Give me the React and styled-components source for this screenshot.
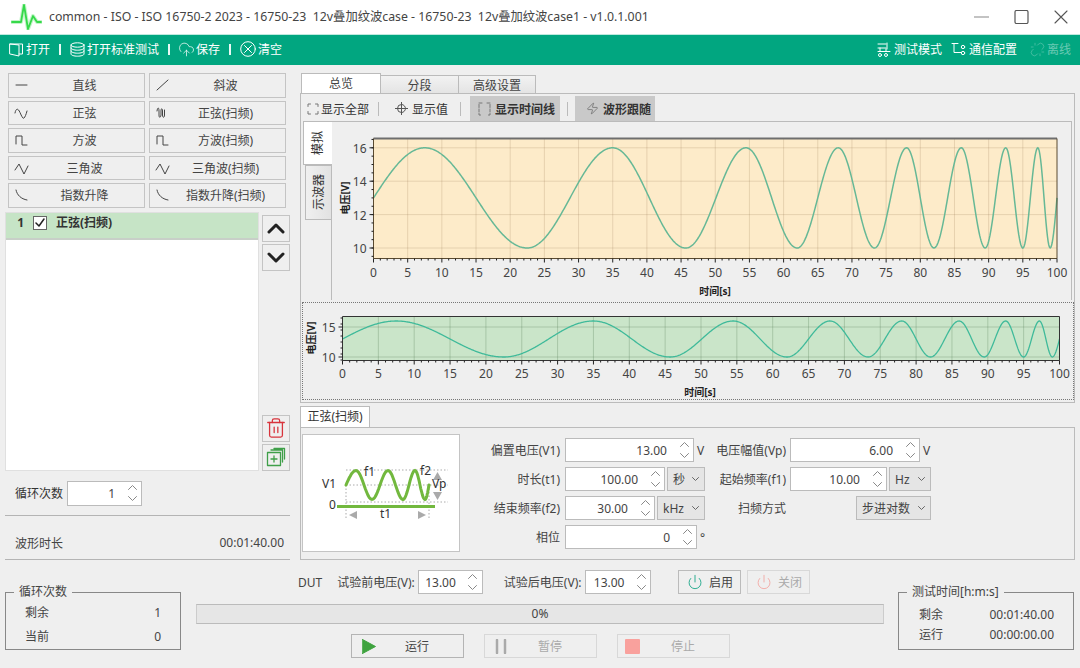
import React from "react";
import styled, { createGlobalStyle } from "styled-components";
import { CloudUpload, Power, Zap, Trash2, Unlink } from "lucide-react";

const FONT = `"Noto Sans", "Noto Sans CJK SC", "Open Sans", sans-serif`;

const Global = createGlobalStyle`
  html, body { margin: 0; padding: 0; background: #efefef; }
  * { box-sizing: border-box; }
  body { font-family: ${FONT}; font-size: 12px; color: #333; }
`;

const Page = styled.div`
  width: 1080px; height: 668px; overflow: hidden; background: #efefef;
  display: flex; flex-direction: column;
`;

/* ---------- title bar ---------- */
const TitleBar = styled.header`
  height: 34px; background: #fff; display: flex; align-items: center; padding-left: 11px;
`;
const TitleText = styled.div`
  margin-left: 7px; font-size: 12.3px; color: #444; white-space: pre; flex: 1; line-height: 34px;
`;
const WinControls = styled.div`
  display: flex; gap: 25px; padding-right: 12px; align-items: center;
`;

/* ---------- green toolbar ---------- */
const Toolbar = styled.nav`
  height: 31px; background: #01a680; color: #fff; display: flex; align-items: center;
  padding: 0 9px 2px; justify-content: space-between; border-top: 1px solid #bfe9de;
`;
const ToolGroup = styled.div`display: flex; align-items: center;`;
const ToolItem = styled.div`
  display: flex; align-items: center; gap: 2px; white-space: nowrap; font-size: 12px;
  margin-right: ${p => p.$mr || 0}px; opacity: ${p => p.$faded ? 0.4 : 1};
`;
const ToolSep = styled.span`
  width: 2px; height: 11px; background: #e8f8f4; margin: 0 9px;
`;
const CloudIcon = styled(CloudUpload)`margin: 0 -1px; flex: none;`;

/* ---------- body ---------- */
const Body = styled.div`height: 505px; display: flex;`;
const LeftCol = styled.aside`
  width: 300px; padding: 8px 10px 0 5px; display: flex; flex-direction: column;
`;
const WaveGrid = styled.div`
  display: grid; grid-template-columns: 137px 137px; gap: 3px 4px; margin-left: 3px;
`;
const WaveBtn = styled.button`
  height: 24.5px; background: #efefef; border: 1px solid #c4c4c4; padding: 0 0 0 5px;
  display: grid; grid-template-columns: 16px 1fr 5px; align-items: center;
  font: 12px ${FONT}; color: #444;
`;
const ListRow = styled.div`display: flex; gap: 3px; margin-top: 4px; height: 259px;`;
const WaveList = styled.div`
  width: 254px; background: #fff; border: 1px solid #e0e0e0;
`;
const WaveRow = styled.div`
  height: 27px; background: #c6e4c6; border-bottom: 2px solid #c8cfc8;
  display: flex; align-items: flex-start; padding-top: 2px; font-weight: 700; color: #333;
`;
const RowNum = styled.span`width: 27px; text-align: right; padding-right: 9px; line-height: 16px;`;
const Check = styled.span`
  width: 14px; height: 14px; border: 1px solid #666; background: #fff; margin: 1px 9px 0 0;
  display: flex; align-items: center; justify-content: center;
`;
const RowText = styled.span`line-height: 16px; font-size: 12px;`;
const SideBtns = styled.div`
  width: 28px; display: flex; flex-direction: column; gap: 2px; padding-top: 3px;
`;
const SquareBtn = styled.button`
  width: 28px; height: 27px; background: #efefef; border: 1px solid #c4c4c4; padding: 0;
  display: flex; align-items: center; justify-content: center;
  margin-top: ${p => p.$push ? "auto" : "0"};
`;
const LoopRow = styled.div`
  display: flex; align-items: center; gap: 4px; margin-top: 10px; padding-left: 10px; height: 25px;
`;
const Duration = styled.div`
  margin-top: 9px; height: 45px; padding: 11px 6px 0 10px;
  border-top: 1px solid #b4b4b4; border-bottom: 1px solid #b4b4b4;
  display: flex; justify-content: space-between; align-items: center; color: #444;
`;

/* ---------- right column ---------- */
const RightCol = styled.main`width: 775px; padding-top: 8px; display: flex; flex-direction: column;`;
const TabBar = styled.div`display: flex; height: 20px; align-items: flex-end; padding-left: 1px;`;
const Tab = styled.div`
  width: ${p => p.$w}px; height: ${p => p.$active ? 20 : 18}px; text-align: center;
  line-height: ${p => p.$active ? 20 : 19}px; font-size: 12px; color: #444;
  background: ${p => p.$active ? "#fff" : "linear-gradient(#f2f2f2,#e4e4e4)"};
  border: 1px solid #bbb; border-bottom: none; margin-right: -1px;
`;
const TabPanel = styled.section`
  height: 310px; border: 1px solid #bbb; padding: 2px 2px 0 0; background: #efefef;
  display: flex; flex-direction: column;
`;
const ChartTools = styled.div`
  height: 25px; display: flex; align-items: stretch; padding-left: 6px; flex: none;
`;
const ChartTool = styled.div`
  display: flex; align-items: center; gap: ${p => p.$gap}px; font-size: 12px; white-space: nowrap;
  padding: 0 ${p => p.$pr}px 0 ${p => p.$pl}px; color: #333;
  background: ${p => p.$on ? "#c9c9c9" : "transparent"};
  font-weight: ${p => p.$on ? 700 : 400};
`;
const ChartSep = styled.span`
  width: 1px; height: 14px; background: #bbb; align-self: center; margin: 0 ${p => p.$m}px;
`;
const ChartArea = styled.div`display: flex; height: 179px; flex: none;`;
const VTabs = styled.div`width: 30px; display: flex; flex-direction: column; padding-left: 2px;`;
const VTab = styled.div`
  display: flex; align-items: center; justify-content: center;
  height: ${p => p.$h}px; color: #333;
  background: ${p => p.$active ? "#fff" : "linear-gradient(90deg,#f0f0f0,#e2e2e2)"};
  border: 1px solid #bbb; border-right: none;
  margin-left: ${p => p.$active ? 0 : 2}px;
  margin-right: ${p => p.$active ? -1 : 0}px;
  position: relative; z-index: ${p => p.$active ? 1 : 0};
`;
const VTabText = styled.span`
  writing-mode: vertical-rl; text-orientation: sideways; transform: rotate(180deg);
  font-size: 12px; line-height: 14px;
`;
const ChartPane = styled.div`
  width: 741px; height: 179px; border: 1px solid #bbb; border-bottom: none;
`;
const MiniPane = styled.div`
  margin: 2px 0 0 1px; width: 772px; height: 98px; border: 1px dotted #777;
`;
const ParamTab = styled.div`
  margin-top: 3px; width: 70px; height: 21px; background: #fff; border: 1px solid #bbb; border-bottom: none;
  text-align: center; line-height: 19px; font-size: 12px;
`;
const ParamPanel = styled.section`
  height: 133px; border: 1px solid #bbb; display: flex; padding: 6px 0 0 1px;
`;
const Diagram = styled.div`
  width: 158px; height: 118px; background: #fff; border: 1px solid #c4c4c4; flex: none;
`;
const Form = styled.div`
  display: grid; grid-template-columns: 105px 140px 85px 142px; grid-auto-rows: 24px;
  row-gap: 5px; margin-top: 4px; align-items: center;
`;
const FieldLabel = styled.label`
  text-align: right; padding-right: ${p => p.$pr ?? 5}px; font-size: 12px; color: #444; white-space: nowrap;
`;
const FieldCtl = styled.div`display: flex; align-items: center; gap: 2px; height: 24px;`;
const FieldRight = styled(FieldCtl)`justify-content: flex-end; padding-right: 1px;`;
const Unit = styled.span`margin-left: 1px; font-size: 12px; color: #444;`;

const SpinBox = styled.div`
  width: ${p => p.$w}px; height: ${p => p.$h || 24}px; background: #fff; border: 1px solid #bbb;
  display: flex; align-items: center; justify-content: flex-end; flex: none;
  font-size: 12px; color: #444;
`;
const SpinValue = styled.span`padding-right: 8px;`;
const SpinArrows = styled.span`
  width: 18px; display: flex; flex-direction: column; align-items: center; gap: 6px; flex: none;
`;
const Select = styled.div`
  width: ${p => p.$w}px; height: 24px; background: #e5e5e5; border: 1px solid #bbb;
  display: flex; align-items: center; justify-content: space-between; padding: 0 5px 0 5px;
  font-size: 12px; color: #444; flex: none;
`;

/* ---------- bottom ---------- */
const Bottom = styled.footer`display: flex; height: 98px; padding-left: 5px; gap: 15px;`;
const Group = styled.fieldset`
  width: 176px; height: 65px; margin: 15px 0 0 0; padding: ${p => p.$pt}px 19px 0 ${p => p.$pl}px;
  border: 1px solid #888; flex: none;
  legend {
    margin-left: ${p => 8 - p.$pl}px; padding: 0 5px; font-size: 12px; line-height: 14px; color: #444;
  }
`;
const GroupRow = styled.div`
  display: flex; justify-content: space-between; height: ${p => p.$h}px; align-items: center; color: #444;
`;
const Center = styled.div`width: 688px; flex: none; margin-right: -1px; display: flex; flex-direction: column;`;
const DutRow = styled.div`display: flex; align-items: center; height: 24px; padding-left: 102px;`;
const DutLabel = styled.span`
  margin: 0 ${p => p.$mr ?? 3}px 0 ${p => p.$ml ?? 0}px; font-size: 12px; color: #444; white-space: nowrap;
`;
const SmallBtn = styled.button`
  width: 63px; height: 24px; margin-left: ${p => p.$ml}px; background: #efefef;
  border: 1px solid ${p => p.$off ? "#d8d8d8" : "#bbb"};
  color: ${p => p.$off ? "#aaa" : "#444"}; font: 12px ${FONT};
  display: flex; align-items: center; justify-content: center; gap: 6px; padding: 0;
`;
const Progress = styled.div`
  margin-top: 10px; height: 20px; background: #e6e6e6; border-top: 1px solid #bbb; border-bottom: 1px solid #bbb;
  border-left: 1px solid #ccc; border-right: 1px solid #ccc;
  text-align: center; line-height: 18px; font-size: 12px; color: #444;
`;
const ActionRow = styled.div`display: flex; justify-content: center; gap: 20px; margin-top: 10px;`;
const ActionBtn = styled.button`
  width: 113px; height: 24px; background: #efefef; border: 1px solid ${p => p.$off ? "#d8d8d8" : "#b4b4b4"};
  padding: 0 0 0 10px; display: grid; grid-template-columns: 16px 1fr 6px; align-items: center;
  font: 12px ${FONT}; color: ${p => p.$off ? "#aaa" : "#444"};
`;
const StopMark = styled.span`
  display: block; width: 15px; height: 15px; margin-left: -3px; background: #f9a19d; border-radius: 1px;
`;

/* ---------- icons ---------- */
const Ico = ({ w = 14, h = 14, children, color = "#444", sw = 1, vb }) => (
  <svg width={w} height={h} viewBox={vb || `0 0 ${w} ${h}`} fill="none" stroke={color} strokeWidth={sw}
    strokeLinecap="round" strokeLinejoin="round" style={{ flex: "none", display: "block" }}>{children}</svg>
);
const Up = () => <Ico w={9} h={5} color="#888"><path d="M.5 4.5 4.5.5l4 4" /></Ico>;
const Down = () => <Ico w={9} h={5} color="#888"><path d="M.5.5l4 4 4-4" /></Ico>;
const Small = () => <Ico w={7} h={4} color="#666"><path d="M.5.5l3 3 3-3" /></Ico>;

const WAVES = {
  line: <path d="M2 7h11" />,
  ramp: <path d="M2 12 13 2" />,
  sine: <path d="M1 7C2 2 4 2 6 6.500S9 13 10 12s2-3 3-7" />,
  sweep: <path d="M2 5c.5-4 2-4 2 0v4c0 3 1.500 3 2 0V5c0-3 1.500-3 1.500 0v4c0 3 2 3 2 0V4" />,
  square: <path d="M2 11V3h6v9h5" />,
  tri: <path d="M1 9l4-6 5 10 4-8" />,
  exp: <path d="M2 2c1 5 5 9 11 10" />,
};

const Chevron = ({ up }) => (
  <Ico w={18} h={11} color="#222" sw={3}><path d={up ? "M2 9l7-7 7 7" : "M2 2l7 7 7-7"} /></Ico>
);

/* ---------- charts ---------- */
const EXT = [7.5, 22.5, 35, 45.7, 54.5, 62, 68, 73.3, 78, 82, 86, 89.5, 92.5, 95, 97.2, 99];
const wave = t => {
  const knots = [0, ...EXT, 100];
  const phases = [0, ...EXT.map((_, i) => Math.PI / 2 + i * Math.PI)];
  phases.push(phases[phases.length - 1] + Math.PI / 2);
  let i = 0;
  while (i < knots.length - 2 && t > knots[i + 1]) i++;
  const ph = phases[i] + (phases[i + 1] - phases[i]) * (t - knots[i]) / (knots[i + 1] - knots[i]);
  return 13 + 3 * Math.sin(ph);
};

const Chart = ({ w, h, x0, x1, top, bottom, yOf, yTicks, yMinor, bg, grid, line, lineW, frame, topLine, topW,
  xLabelY, xTitle, yTitle, fs }) => {
  const xOf = t => x0 + (x1 - x0) * t / 100;
  const pts = [];
  for (let t = 0; t <= 100.001; t += 0.1) pts.push(`${xOf(t).toFixed(2)},${yOf(wave(t)).toFixed(2)}`);
  const majors = Array.from({ length: 21 }, (_, i) => i * 5);
  const minors = Array.from({ length: 101 }, (_, i) => i).filter(i => i % 5 !== 0);
  return (
    <svg width={w} height={h} style={{ display: "block" }}>
      <rect x={x0} y={top} width={x1 - x0} height={bottom - top} fill={bg} />
      {majors.slice(1, -1).map(t => <line key={t} x1={xOf(t)} x2={xOf(t)} y1={top} y2={bottom} stroke={grid} />)}
      {yTicks.map(v => <line key={v} x1={x0} x2={x1} y1={yOf(v)} y2={yOf(v)} stroke={grid} />)}
      <polyline points={pts.join(" ")} fill="none" stroke={line} strokeWidth={lineW} />
      <line x1={x0} x2={x1} y1={top} y2={top} stroke={topLine} strokeWidth={topW} />
      <line x1={x1} x2={x1} y1={top} y2={bottom} stroke={frame} />
      <line x1={x0} x2={x0} y1={top} y2={bottom} stroke={frame} />
      <line x1={x0} x2={x1} y1={bottom} y2={bottom} stroke={frame} strokeWidth="1.2" />
      {minors.map(t => <line key={t} x1={xOf(t)} x2={xOf(t)} y1={bottom} y2={bottom + 2} stroke="#222" />)}
      {majors.map(t => <line key={t} x1={xOf(t)} x2={xOf(t)} y1={bottom} y2={bottom + 4} stroke="#222" />)}
      {yMinor.map(v => <line key={v} x1={x0 - 2} x2={x0} y1={yOf(v)} y2={yOf(v)} stroke="#222" />)}
      {yTicks.map(v => <line key={v} x1={x0 - 4} x2={x0} y1={yOf(v)} y2={yOf(v)} stroke="#222" />)}
      {yTicks.map(v => (
        <text key={v} x={x0 - 7} y={yOf(v) + 5} textAnchor="end" fontSize={fs} fill="#444">{v}</text>
      ))}
      {majors.map(t => (
        <text key={t} x={xOf(t)} y={xLabelY} textAnchor="middle" fontSize={fs} fill="#444">{t}</text>
      ))}
      <text x={xTitle[0]} y={xTitle[1]} textAnchor="middle" fontSize="10" fontWeight="700" fill="#222">时间[s]</text>
      <text transform={`translate(${yTitle[0]} ${yTitle[1]}) rotate(-90)`} textAnchor="middle" fontSize="10"
        fontWeight="700" fill="#222">电压[V]</text>
    </svg>
  );
};

const range = (a, b, s) => {
  const r = [];
  for (let v = a; v <= b + 1e-6; v += s) r.push(+v.toFixed(2));
  return r;
};

const diagramWave = () => {
  const ks = [[44, 0], [54, 1], [70, 3], [86, 5], [101, 7], [113, 9], [123, 11], [127, 12]];
  const pts = [];
  for (let i = 0; i < ks.length - 1; i++) {
    for (let s = 0; s <= 12; s++) {
      const x = ks[i][0] + (ks[i + 1][0] - ks[i][0]) * s / 12;
      const ph = (ks[i][1] + (ks[i + 1][1] - ks[i][1]) * s / 12) * Math.PI / 2;
      pts.push(`${x.toFixed(1)},${(51 - 14.5 * Math.sin(ph)).toFixed(1)}`);
    }
  }
  return pts.join(" ");
};

const Spin = ({ w, v, h }) => (
  <SpinBox $w={w} $h={h}>
    <SpinValue>{v}</SpinValue>
    <SpinArrows><Up /><Down /></SpinArrows>
  </SpinBox>
);

const Sel = ({ w, v }) => <Select $w={w}><span>{v}</span><Small /></Select>;

const BUTTONS = [
  ["line", "直线", "ramp", "斜波"],
  ["sine", "正弦", "sweep", "正弦(扫频)"],
  ["square", "方波", "square", "方波(扫频)"],
  ["tri", "三角波", "tri", "三角波(扫频)"],
  ["exp", "指数升降", "exp", "指数升降(扫频)"],
];

const Wbtn = ({ k, t }) => (
  <WaveBtn>
    <Ico w={15} h={14} color="#444">{WAVES[k]}</Ico>
    <span>{t}</span>
    <span />
  </WaveBtn>
);

export default function App() {
  return (
    <Page>
      <Global />
      <TitleBar>
        <svg width="31" height="26" viewBox="0 0 31 26" fill="none" style={{ flex: "none" }}>
          <path d="M1 18H10L13 1L17 25L22 12L26 18H30" stroke="#35d94a" strokeOpacity="0.3" strokeWidth="4" strokeLinejoin="round" strokeLinecap="round" />
          <path d="M1 18H10L13 1L17 25L22 12L26 18H30" stroke="#35d94a" strokeWidth="1.8" strokeLinejoin="round" strokeLinecap="round" />
        </svg>
        <TitleText>{"common - ISO - ISO 16750-2 2023 - 16750-23  12v叠加纹波case - 16750-23  12v叠加纹波case1 - v1.0.1.001"}</TitleText>
        <WinControls>
          <Ico w={15} h={14} color="#888" sw={1.2}><path d="M0 7h15" /></Ico>
          <Ico w={15} h={14} color="#555" sw={1.2}><rect x="1" y="0.500" width="13" height="13" rx="1.500" /></Ico>
          <Ico w={14} h={14} color="#555" sw={1.1}><path d="M1 1l12 12M13 1 1 13" /></Ico>
        </WinControls>
      </TitleBar>

      <Toolbar>
        <ToolGroup>
          <ToolItem>
            <Ico w={15} h={15} color="#fff"><path d="M1 2l9 1v11l-9-2zM1 2h12.500v10H10" /></Ico>打开
          </ToolItem>
          <ToolSep />
          <ToolItem>
            <Ico w={15} h={15} color="#fff">
              <ellipse cx="7.500" cy="3" rx="6.500" ry="2.200" />
              <path d="M1 3v9c0 1.200 3 2.200 6.500 2.200S14 13.200 14 12V3M1 6c0 1.200 3 2.200 6.500 2.200S14 7.200 14 6M1 9c0 1.200 3 2.200 6.500 2.200S14 10.200 14 9" />
            </Ico>
            打开标准测试
          </ToolItem>
          <ToolSep />
          <ToolItem><CloudIcon size={17} strokeWidth={1} color="#fff" />保存</ToolItem>
          <ToolSep />
          <ToolItem>
            <Ico w={16} h={16} color="#fff">
              <circle cx="8" cy="8" r="7.300" />
              <path d="M4.500 4.500l7 7M11.500 4.500l-7 7" />
            </Ico>
            清空
          </ToolItem>
        </ToolGroup>
        <ToolGroup>
          <ToolItem $mr={9}>
            <Ico w={14} h={15} color="#fff"><path d="M1 2h8M10 1v6M1 6h8M3 6v3M1 9.500h12M9 9.500V7" /><circle cx="3" cy="13" r="1.500" /><circle cx="9" cy="13" r="1.500" /></Ico>
            <span style={{ marginLeft: 1 }}>测试模式</span>
          </ToolItem>
          <ToolItem $mr={13}>
            <Ico w={16} h={15} color="#fff"><path d="M1 1.500h6M3 1.500v9h7" /><circle cx="12" cy="5" r="1.700" /><circle cx="12" cy="11" r="1.700" /></Ico>
            通信配置
          </ToolItem>
          <ToolItem $faded><Unlink size={15} strokeWidth={1} color="#fff" />离线</ToolItem>
        </ToolGroup>
      </Toolbar>

      <Body>
        <LeftCol>
          <WaveGrid>
            {BUTTONS.map(([a, b, c, d]) => (
              <React.Fragment key={b}>
                <Wbtn k={a} t={b} />
                <Wbtn k={c} t={d} />
              </React.Fragment>
            ))}
          </WaveGrid>
          <ListRow>
            <WaveList>
              <WaveRow>
                <RowNum>1</RowNum>
                <Check>
                  <Ico w={10} h={10} color="#222" sw={1.5}><path d="M1 5l3 3 5-7" /></Ico>
                </Check>
                <RowText>正弦(扫频)</RowText>
              </WaveRow>
            </WaveList>
            <SideBtns>
              <SquareBtn><Chevron up /></SquareBtn>
              <SquareBtn><Chevron /></SquareBtn>
              <SquareBtn $push><Trash2 size={22} strokeWidth={1.4} color="#d8343c" /></SquareBtn>
              <SquareBtn>
                <Ico w={20} h={20} color="#3f9f49" sw={1.3}>
                  <rect x="1.500" y="5.500" width="13" height="13" />
                  <path d="M5 3h11.500v12M8 1.500h10.500V12M8 9v6M5 12h6" />
                </Ico>
              </SquareBtn>
            </SideBtns>
          </ListRow>
          <LoopRow>
            <span>循环次数</span>
            <Spin w={75} v="1" h={25} />
          </LoopRow>
          <Duration>
            <span>波形时长</span>
            <span>00:01:40.00</span>
          </Duration>
        </LeftCol>

        <RightCol>
          <TabBar>
            <Tab $w={80} $active>总览</Tab>
            <Tab $w={79}>分段</Tab>
            <Tab $w={78}>高级设置</Tab>
          </TabBar>
          <TabPanel>
            <ChartTools>
              <ChartTool $gap={2} $pl={0} $pr={0}>
                <Ico w={12} h={12} color="#777"><path d="M1 3.500V1h2.500M8.500 1H11v2.500M1 8.500V11h2.500M8.500 11H11V8.500" /></Ico>
                显示全部
              </ChartTool>
              <ChartSep $m={9} />
              <ChartTool $gap={4} $pl={7} $pr={3}>
                <Ico w={13} h={13} color="#555"><circle cx="6.500" cy="6.500" r="4" /><path d="M6.500 0v13M0 6.500h13" /></Ico>
                显示值
              </ChartTool>
              <ChartSep $m={9} />
              <ChartTool $on $gap={4} $pl={8} $pr={5}>
                <Ico w={13} h={14} color="#777"><path d="M4 1H1v12h3M9 1h3v12H9" strokeDasharray="3 1.500" /></Ico>
                显示时间线
              </ChartTool>
              <ChartSep $m={7} />
              <ChartTool $on $gap={4} $pl={11} $pr={4}>
                <Zap size={13} strokeWidth={1} color="#444" />
                波形跟随
              </ChartTool>
            </ChartTools>
            <ChartArea>
              <VTabs>
                <VTab $active $h={44}><VTabText>模拟</VTabText></VTab>
                <VTab $h={55}><VTabText>示波器</VTabText></VTab>
              </VTabs>
              <ChartPane>
                <Chart w={739} h={177} x0={41.5} x1={725} top={16.500} bottom={136.500}
                  yOf={v => 126 - (v - 10) * 16.7}
                  yTicks={[10, 12, 14, 16]} yMinor={range(9.5, 16.5, 0.5)}
                  bg="#fdebc9" grid="rgba(150,120,80,0.22)" line="#66b896" lineW={1.5} frame="#5a4a30"
                  topLine="#6e6e6e" topW={2}
                  xLabelY={155} xTitle={[383, 173]} yTitle={[17, 76]} fs={12} />
              </ChartPane>
            </ChartArea>
            <MiniPane>
              <Chart w={770} h={96} x0={39.5} x1={756.5} top={13.500} bottom={57.500}
                yOf={v => 54 - (v - 10) * 6}
                yTicks={[10, 15]} yMinor={range(9.5, 16.5, 1)}
                bg="#cae5c9" grid="rgba(80,120,80,0.28)" line="#3fba9a" lineW={1.3} frame="#333"
                topLine="#333" topW={1.2}
                xLabelY={75} xTitle={[397, 93]} yTitle={[12, 35]} fs={12} />
            </MiniPane>
          </TabPanel>

          <ParamTab>正弦(扫频)</ParamTab>
          <ParamPanel>
            <Diagram>
              <svg width="156" height="116" viewBox="1 1 156 116" style={{ display: "block" }} fontSize="12" fill="#333">
                <g stroke="#aaa" strokeDasharray="1.500 2" fill="none">
                  <path d="M44 36H146M44 51H146M44 68H146M44 51V84M127 51V84" />
                </g>
                <polyline points={diagramWave()} fill="none" stroke="#72b83e" strokeWidth="3" strokeLinecap="round" />
                <rect x="35" y="71" width="98" height="3" fill="#72b83e" />
                <path d="M131 46l4.500-8 4.500 8zM131 58l4.500 8 4.500-8z" fill="#aaa" />
                <path d="M47 81l8-4v8zM124 81l-8-4v8z" fill="#aaa" />
                <text x="20" y="54">V1</text>
                <text x="27" y="75">0</text>
                <text x="62" y="42">f1</text>
                <text x="118" y="41">f2</text>
                <text x="130" y="54">Vp</text>
                <text x="78" y="84">t1</text>
              </svg>
            </Diagram>
            <Form>
              <FieldLabel>偏置电压(V1)</FieldLabel>
              <FieldCtl><Spin w={129} v="13.00" /><Unit>V</Unit></FieldCtl>
              <FieldLabel $pr={4}>电压幅值(Vp)</FieldLabel>
              <FieldCtl><Spin w={130} v="6.00" /><Unit>V</Unit></FieldCtl>

              <FieldLabel>时长(t1)</FieldLabel>
              <FieldCtl><Spin w={100} v="100.00" /><Sel w={38} v="秒" /></FieldCtl>
              <FieldLabel $pr={4}>起始频率(f1)</FieldLabel>
              <FieldCtl><Spin w={97} v="10.00" /><Sel w={42} v="Hz" /></FieldCtl>

              <FieldLabel>结束频率(f2)</FieldLabel>
              <FieldCtl><Spin w={90} v="30.00" /><Sel w={48} v="kHz" /></FieldCtl>
              <FieldLabel $pr={4}>扫频方式</FieldLabel>
              <FieldRight><Sel w={75} v="步进对数" /></FieldRight>

              <FieldLabel>相位</FieldLabel>
              <FieldCtl><Spin w={132} v="0" /><Unit>°</Unit></FieldCtl>
              <span />
              <span />
            </Form>
          </ParamPanel>
        </RightCol>
      </Body>

      <Bottom>
        <Group $pl={19} $pt={1}>
          <legend>循环次数</legend>
          <GroupRow $h={24}><span>剩余</span><span>1</span></GroupRow>
          <GroupRow $h={24}><span>当前</span><span>0</span></GroupRow>
        </Group>
        <Center>
          <DutRow>
            <DutLabel $mr={15}>DUT</DutLabel>
            <DutLabel>试验前电压(V):</DutLabel>
            <Spin w={65} v="13.00" />
            <DutLabel $ml={21} $mr={4}>试验后电压(V):</DutLabel>
            <Spin w={66} v="13.00" />
            <SmallBtn $ml={27}><Power size={16} strokeWidth={1.4} color="#22a98c" />启用</SmallBtn>
            <SmallBtn $ml={6} $off><Power size={16} strokeWidth={1.4} color="#f2aaa6" />关闭</SmallBtn>
          </DutRow>
          <Progress>0%</Progress>
          <ActionRow>
            <ActionBtn>
              <Ico w={14} h={15} color="#3fa33f"><path d="M0.500 0.500 13.500 7.500 0.500 14.500z" fill="#3fa33f" /></Ico>
              <span>运行</span>
              <span />
            </ActionBtn>
            <ActionBtn $off>
              <Ico w={14} h={15} color="#aaa" sw={2.500}><path d="M2 1v13M10 1v13" /></Ico>
              <span>暂停</span>
              <span />
            </ActionBtn>
            <ActionBtn $off>
              <StopMark />
              <span>停止</span>
              <span />
            </ActionBtn>
          </ActionRow>
        </Center>
        <Group $pl={20} $pt={5}>
          <legend>测试时间[h:m:s]</legend>
          <GroupRow $h={20}><span>剩余</span><span>00:01:40.00</span></GroupRow>
          <GroupRow $h={20}><span>运行</span><span>00:00:00.00</span></GroupRow>
        </Group>
      </Bottom>
    </Page>
  );
}
